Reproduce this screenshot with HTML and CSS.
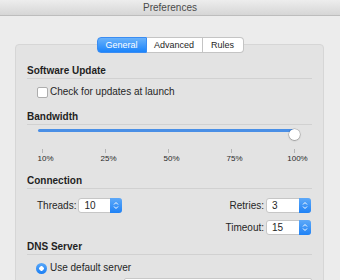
FILE: index.html
```html
<!DOCTYPE html>
<html>
<head>
  <meta charset="UTF-8">
  <title>Preferences</title>
  <link rel="stylesheet" href="styles.css">
</head>
<body>
  <div class="titlebar">Preferences</div>

  <div class="tabs">
    <div class="tab tab-general active">General</div>
    <div class="tab tab-advanced">Advanced</div>
    <div class="tab tab-rules">Rules</div>
  </div>

  <div class="panel">
    <div class="section">
      <div class="heading">Software Update</div>
      <div class="check-row">
        <span class="checkbox"></span>
        <span>Check for updates at launch</span>
      </div>
    </div>

    <div class="section section-bandwidth">
      <div class="heading">Bandwidth</div>
      <div class="slider">
        <div class="track"></div>
        <div class="thumb"></div>
      </div>
      <div class="scale">
        <div class="mark"><span class="tick"></span><span class="mark-label">10%</span></div>
        <div class="mark"><span class="tick"></span><span class="mark-label">25%</span></div>
        <div class="mark"><span class="tick"></span><span class="mark-label">50%</span></div>
        <div class="mark"><span class="tick"></span><span class="mark-label">75%</span></div>
        <div class="mark"><span class="tick"></span><span class="mark-label">100%</span></div>
      </div>
    </div>

    <div class="section section-connection">
      <div class="heading">Connection</div>
      <div class="conn">
        <div class="field-row">
          <span>Threads:</span>
          <div class="stepper">
            <span class="value">10</span>
            <span class="arrows"><svg width="6" height="9" viewBox="0 0 6 9"><path d="M1 3.5 L3 1.5 L5 3.5 M1 5.5 L3 7.5 L5 5.5" fill="none" stroke="#fff" stroke-width="1"/></svg></span>
          </div>
        </div>
        <div class="conn-right">
          <div class="field-row">
            <span>Retries:</span>
            <div class="stepper">
              <span class="value">3</span>
              <span class="arrows"><svg width="6" height="9" viewBox="0 0 6 9"><path d="M1 3.5 L3 1.5 L5 3.5 M1 5.5 L3 7.5 L5 5.5" fill="none" stroke="#fff" stroke-width="1"/></svg></span>
            </div>
          </div>
          <div class="field-row">
            <span>Timeout:</span>
            <div class="stepper">
              <span class="value">15</span>
              <span class="arrows"><svg width="6" height="9" viewBox="0 0 6 9"><path d="M1 3.5 L3 1.5 L5 3.5 M1 5.5 L3 7.5 L5 5.5" fill="none" stroke="#fff" stroke-width="1"/></svg></span>
            </div>
          </div>
        </div>
      </div>
    </div>

    <div class="section section-dns">
      <div class="heading">DNS Server</div>
      <div class="radio-row">
        <span class="radio"></span>
        <span>Use default server</span>
      </div>
      <div class="server-row">
        <div class="server-input"></div>
      </div>
    </div>
  </div>
</body>
</html>
```

FILE: styles.css
```css
body {
  width: 340px;
  height: 280px;
  margin: 0;
  overflow: hidden;
  font-family: "Liberation Sans", Arial, sans-serif;
  font-size: 10px;
  color: #262626;
  background-color: #ececec;
}

.titlebar {
  height: 15px;
  line-height: 15px;
  text-align: center;
  color: #4a4a4a;
  background: linear-gradient(#ededed, #d6d6d6);
  border-bottom: 1px solid #bdbdbd;
}

.tabs {
  display: flex;
  justify-content: center;
  margin: 21px 0 -9px 0;
  position: relative;
  z-index: 1;
  font-size: 9px;
}

.tab {
  height: 14px;
  line-height: 14px;
  text-align: center;
  background: #fff;
  color: #1e1e1e;
  border: 1px solid #c4c4c4;
  border-left: none;
}

.tab-general {
  width: 48px;
  border-left: 1px solid #c4c4c4;
  border-radius: 4px 0 0 4px;
}

.tab-advanced {
  width: 55px;
}

.tab-rules {
  width: 40px;
  border-radius: 0 4px 4px 0;
}

.tab.active {
  color: #fff;
  background: linear-gradient(#6ab2fa, #1b84fb);
  border-color: #3a8cf2;
}

.panel {
  height: 240px;
  margin: 0 16px 0 15px;
  padding: 20px 11px 0 11px;
  background-color: #e3e3e3;
  border: 1px solid #d6d6d6;
  border-radius: 4px;
}

.heading {
  font-weight: bold;
  line-height: 12px;
  padding-bottom: 1px;
  color: #1f1f1f;
  border-bottom: 1px solid #d1d1d1;
}

.section-bandwidth {
  margin-top: 13px;
}

.section-connection {
  margin-top: 11px;
}

.section-dns {
  margin-top: 6px;
}

.check-row {
  display: flex;
  align-items: center;
  gap: 2px;
  margin-top: 7px;
  padding-left: 10px;
  line-height: 12px;
}

.checkbox {
  width: 9px;
  height: 9px;
  background: #fff;
  border: 1px solid #adadad;
  border-radius: 2px;
}

.slider {
  position: relative;
  width: 262px;
  height: 11px;
  margin: 2px 0 0 11px;
}

.track {
  width: 256px;
  height: 3px;
  margin-top: 4px;
  background: #4a8fe6;
  border-radius: 2px;
}

.thumb {
  position: absolute;
  left: 251px;
  top: 0;
  width: 11px;
  height: 11px;
  background: #fff;
  border-radius: 50%;
  box-shadow: 0 0 0 0.5px rgba(0, 0, 0, 0.2), 0 0.5px 1.5px rgba(0, 0, 0, 0.4);
}

.scale {
  display: flex;
  justify-content: space-between;
  width: 253px;
  margin: 9px 0 0 15px;
}

.mark {
  width: 1px;
  display: flex;
  flex-direction: column;
  align-items: center;
}

.tick {
  width: 1px;
  height: 4px;
  background: #b4b4b4;
}

.mark-label {
  margin-top: 1px;
  padding-left: 6px;
  font-size: 8px;
  line-height: 10px;
  white-space: nowrap;
  color: #2a2a2a;
}

.conn {
  display: flex;
  justify-content: space-between;
  align-items: flex-start;
  margin-top: 9px;
  padding: 0 1px 0 10px;
}

.conn-right {
  display: flex;
  flex-direction: column;
  align-items: flex-end;
  gap: 7px;
}

.field-row {
  display: flex;
  align-items: center;
  gap: 2px;
}

.stepper {
  display: flex;
  width: 42px;
  height: 13px;
  background: #fff;
  border: 1px solid #c6c6c6;
  border-radius: 3px;
}

.conn-right .stepper {
  width: 43px;
}

.value {
  flex: 1;
  padding-left: 5px;
  line-height: 13px;
}

.arrows {
  width: 12px;
  margin: -1px -1px -1px 0;
  display: flex;
  align-items: center;
  justify-content: center;
  background: linear-gradient(#5ea9f8, #1f82f6);
  border-radius: 0 3px 3px 0;
}

.radio-row {
  display: flex;
  align-items: center;
  gap: 3px;
  margin-top: 7px;
  padding-left: 9px;
  line-height: 12px;
}

.radio {
  width: 11px;
  height: 11px;
  border-radius: 50%;
  background: radial-gradient(circle, #fff 0 2px, transparent 2.5px), linear-gradient(#5aa8f8, #1a7ff5);
}

.server-row {
  margin-top: 4px;
  padding-left: 97px;
}

.server-input {
  height: 18px;
  background: #fff;
  border: 1px solid #c8c8c8;
  border-radius: 2px;
}
```
